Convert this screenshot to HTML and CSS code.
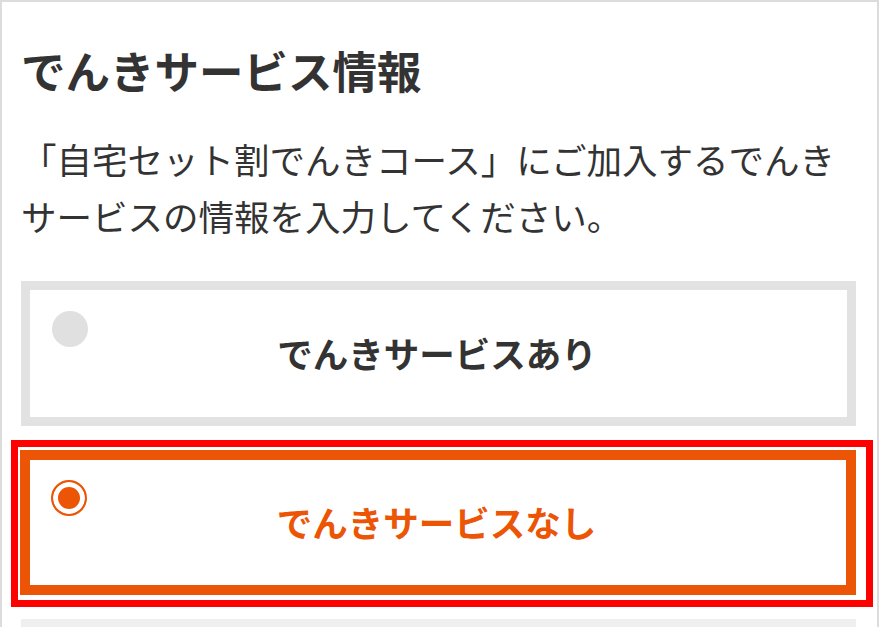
FILE: index.html
```html
<!DOCTYPE html>
<html lang="ja">
<head>
    <meta charset="UTF-8">
    <title>でんきサービス情報</title>
    <link rel="stylesheet" href="styles.css">
</head>
<body>
    <div class="frame">
        <h2 class="title">でんきサービス情報</h2>
        <p class="lead">「自宅セット割でんきコース」にご加入するでんきサービスの情報を入力してください。</p>
        <div class="choices">
            <label class="choice">
                <span class="radio"></span>
                <span class="choice_text">でんきサービスあり</span>
            </label>
            <label class="choice choice_on">
                <span class="radio"></span>
                <span class="choice_text">でんきサービスなし</span>
                <span class="mark"></span>
            </label>
            <div class="choice choice_next"></div>
        </div>
    </div>
</body>
</html>
```

FILE: styles.css
```css
html, body {
    margin: 0;
    padding: 0;
    background: #fff;
}
.frame {
    box-sizing: border-box;
    width: 879px;
    height: 627px;
    overflow: hidden;
    border: 2px solid #dcdcdc;
    border-bottom: none;
    padding: 0 21px 0 19px;
    font-family: "Noto Sans CJK JP", "Noto Sans", sans-serif;
    color: #333;
}
.title {
    margin: 0;
    padding-top: 35px;
    font-size: 44.5px;
    line-height: 66px;
    font-weight: bold;
}
.lead {
    margin: 28px 0 0;
    font-size: 35.5px;
    line-height: 56.8px;
}
.choices {
    display: flex;
    flex-direction: column;
    gap: 24px;
    margin-top: 36px;
}
.choice {
    position: relative;
    box-sizing: border-box;
    height: 145px;
    border: 9px solid #e2e2e2;
    background: #fff;
    display: flex;
    align-items: center;
    justify-content: center;
    flex-shrink: 0;
}
.radio {
    position: absolute;
    left: 22px;
    top: 21px;
    box-sizing: border-box;
    width: 36px;
    height: 36px;
    border-radius: 50%;
    background: #e0e0e0;
}
.choice_text {
    font-size: 35.5px;
    font-weight: bold;
    line-height: 1;
    margin-left: -3px;
}
.choice_on {
    border: 10px solid #eb5505;
    margin-left: -1px;
}
.choice_on .radio {
    left: 21px;
    top: 20px;
    border: 2px solid #eb5505;
    background: #eb5505;
    box-shadow: inset 0 0 0 5px #fff;
}
.choice_on .choice_text {
    color: #eb5505;
}
.mark {
    position: absolute;
    left: -19px;
    right: -27px;
    top: -20px;
    bottom: -22px;
    border: 7px solid #ff0000;
}
.choice_next {
    border-color: #efefef;
}
```
